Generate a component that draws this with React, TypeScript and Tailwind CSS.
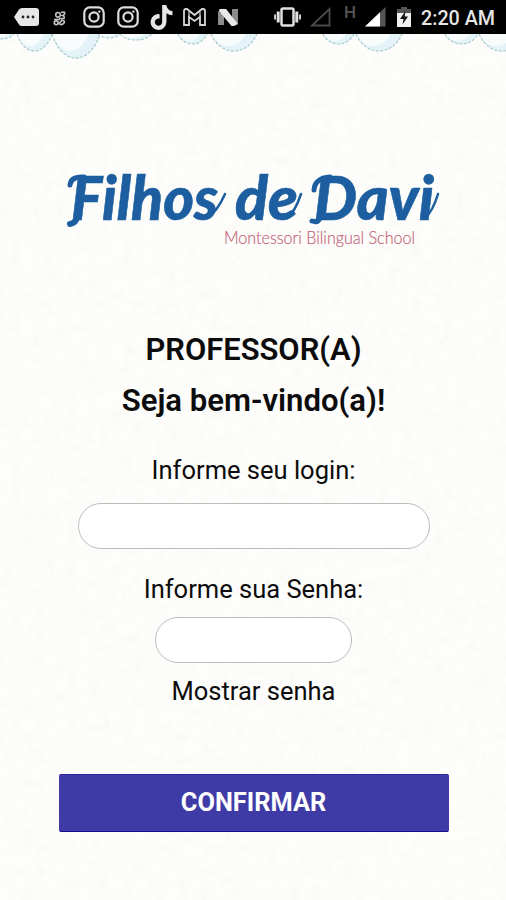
import React from 'react'
import { FaTiktok } from 'react-icons/fa'

const scallops = [
  { x1: -12, x2: 14, bottom: 5 },
  { x1: 17, x2: 52, bottom: 17 },
  { x1: 52, x2: 100, bottom: 24 },
  { x1: 98, x2: 120, bottom: 4 },
  { x1: 120, x2: 152, bottom: 6 },
  { x1: 178, x2: 207, bottom: 10 },
  { x1: 211, x2: 257, bottom: 17 },
  { x1: 323, x2: 354, bottom: 10 },
  { x1: 356, x2: 402, bottom: 17 },
  { x1: 445, x2: 478, bottom: 10 },
  { x1: 479, x2: 525, bottom: 17 },
]

function arc(x1: number, x2: number, bottom: number) {
  const w = (x2 - x1) * 0.22
  const depth = bottom * 1.34
  return `M${x1} 0C${x1 + w} ${depth} ${x2 - w} ${depth} ${x2} 0`
}

function InstagramIcon({ className }: { className: string }) {
  return (
    <svg className={className} width="22" height="22" viewBox="0 0 22 22" fill="none" stroke="#dcdcdc" strokeWidth="2.2">
      <rect x="1.3" y="1.3" width="19.4" height="19.4" rx="5.5" />
      <circle cx="11" cy="11" r="4.6" />
      <circle cx="16.4" cy="5.6" r="1.2" fill="#dcdcdc" stroke="none" />
    </svg>
  )
}

function StatusBar() {
  return (
    <header className="flex h-[34px] items-center bg-black text-[#e6e6e6]">
      <svg className="ml-[14px]" width="25" height="20" viewBox="0 0 25 20">
        <path d="M8 1h14a3 3 0 0 1 3 3v12a3 3 0 0 1-3 3H8q-2 0-3-1.5L0 10l5-7.5Q6 1 8 1z" fill="#e6e6e6" />
        <g fill="#222">
          <circle cx="9" cy="10" r="1.4" />
          <circle cx="14" cy="10" r="1.4" />
          <circle cx="19" cy="10" r="1.4" />
        </g>
      </svg>
      <svg className="mt-[2px] ml-[14px]" width="13" height="15" viewBox="0 0 13 15" fill="none" stroke="#c4c4c4" strokeWidth="1.6">
        <circle cx="5" cy="3.8" r="2.3" />
        <path d="M8 1.2h3.5q.8 2.5-2 3.3 2.5.8 1.5 3H6" />
        <path d="M1 8.5h6" />
        <circle cx="3.2" cy="11.8" r="1.9" />
        <path d="M5.5 13.5l4-5M9 9q3.5 1 2 3t-4 1.5" />
      </svg>
      <InstagramIcon className="ml-[17px]" />
      <InstagramIcon className="ml-[12px]" />
      <FaTiktok className="ml-[10px]" size={25} />
      <svg className="ml-[9px]" width="23" height="18" viewBox="0 0 23 18" fill="none" stroke="#d6d6d6" strokeWidth="1.8">
        <path d="M1 3Q1 1 3 1h1l7.5 6L19 1h1q2 0 2 2v14h-5V9l-5.5 4L6 9v8H1z" />
        <path d="M6 9V3.5M17 9V3.5" strokeWidth="1.2" />
      </svg>
      <svg className="ml-[12px]" width="21" height="17" viewBox="0 0 21 17">
        <path d="M0 2l6 4v10H0zM14 0h6v15l-6-4z" fill="#8c8c8c" />
        <path d="M1.5 0H8l12 15-4 2h-2.5L1 2z" fill="#e8e8e8" />
      </svg>
      <svg className="ml-[35px]" width="27" height="20" viewBox="0 0 27 20" fill="none" stroke="#e0e0e0">
        <rect x="7.5" y="1.5" width="12" height="17" rx="1.5" strokeWidth="2.5" />
        <path d="M4.2 4.5v11M22.8 4.5v11" strokeWidth="3" />
        <path d="M1 7.5v5M26 7.5v5" strokeWidth="1.8" />
      </svg>
      <svg className="ml-[9px]" width="21" height="20" viewBox="0 0 21 20" fill="none" stroke="#4a4a4a" strokeWidth="1.8">
        <path d="M2 18.5L19.5 2v16.5z" />
      </svg>
      <span className="mb-[9px] ml-[13px] w-[13px] font-[Roboto] text-[17px] leading-none font-medium text-[#555]">H</span>
      <svg className="ml-[8px]" width="21" height="20" viewBox="0 0 21 20">
        <path d="M20.5 0v19.5H0z" fill="#555" />
        <path d="M15 5.3v14.2H0z" fill="#fff" />
      </svg>
      <svg className="ml-[11px]" width="14" height="20" viewBox="0 0 14 20">
        <path d="M4 0h6v2h4v4H0V2h4z" fill="#555" />
        <path d="M0 6h14v14H0z" fill="#f0f0f0" />
        <path d="M8.5 4L3 12h3.5L5.5 17.5 11 9.5H7.7z" fill="#111" />
      </svg>
      <span className="mt-[3px] ml-[10px] font-[Roboto] text-[19.7px] leading-none font-medium whitespace-nowrap">2:20 AM</span>
    </header>
  )
}

function Logo() {
  return (
    <svg className="shrink-0" width="506" height="100" viewBox="0 160 506 100">
      <g fill="#1c5e9f" stroke="#1c5e9f" strokeWidth="0.6" strokeLinejoin="round" fontFamily="Lato, sans-serif" fontStyle="italic" fontWeight="900" fontSize="60">
        <text x="71" y="220" textLength="147" lengthAdjust="spacingAndGlyphs">Filhos</text>
        <text x="235" y="220" textLength="63" lengthAdjust="spacingAndGlyphs">de</text>
        <text x="314" y="220" textLength="120" lengthAdjust="spacingAndGlyphs">Davi</text>
      </g>
      {/* brush flourishes around the words */}
      <g fill="none" stroke="#1c5e9f" strokeLinecap="round">
        <path d="M70 185Q71 176 84 177" strokeWidth="5" />
        <path d="M77 217Q76 223 70 224" strokeWidth="6" />
        <path d="M207 218Q217 212 225 194" strokeWidth="2.5" />
        <path d="M287 218Q295 212 301 194" strokeWidth="2.5" />
        <path d="M314 190Q315 178 330 177" strokeWidth="5" />
        <path d="M320 218Q318 223 312 221" strokeWidth="5" />
        <path d="M425 218Q433 211 438 194" strokeWidth="2.5" />
      </g>
      <text x="224" y="243.5" fill="#c4667a" stroke="#c4667a" strokeWidth="0.2" fontFamily="Lato, sans-serif" fontWeight="300" fontSize="17.5" textLength="191" lengthAdjust="spacingAndGlyphs">Montessori Bilingual School</text>
    </svg>
  )
}

export default function App() {
  return (
    <div className="relative flex h-[900px] w-[506px] flex-col overflow-hidden bg-[#fdfdfb] font-[Roboto,sans-serif] text-[#0c0c0c]">
      {/* paper grain */}
      <svg className="absolute inset-0" width="506" height="900">
        <filter id="paper">
          <feTurbulence type="fractalNoise" baseFrequency="0.09" numOctaves="2" seed="4" />
          <feColorMatrix values="0 0 0 0 0.8 0 0 0 0 0.76 0 0 0 0 0.7 0.9 0 0 0 -0.42" />
        </filter>
        <rect width="506" height="900" filter="url(#paper)" opacity="0.4" />
      </svg>
      <div className="relative flex flex-col">
        <StatusBar />
        <svg width="506" height="30" viewBox="0 0 506 30">
          {scallops.map(s => (
            <g key={s.x1}>
              <path d={arc(s.x1, s.x2, s.bottom)} fill="#e4f3f7" />
              <path d={arc(s.x1, s.x2 - (s.x2 - s.x1) * 0.25, s.bottom * 0.7)} fill="#f8fcfc" />
              <path d={arc(s.x1, s.x2, s.bottom)} fill="none" stroke="#a3c8cc" strokeWidth="1.1" strokeDasharray="3 1.5" />
            </g>
          ))}
        </svg>
        <div className="mt-[96px]">
          <Logo />
        </div>
        <main className="flex flex-col items-center pl-px">
          <h1 className="mt-[65px] text-[30.9px] leading-[50px] font-semibold">PROFESSOR(A)</h1>
          <h2 className="mt-[1px] text-[31.1px] leading-[50px] font-semibold">Seja bem-vindo(a)!</h2>
          <label htmlFor="login" className="mt-[24px] text-[25.5px] leading-[40px]">Informe seu login:</label>
          <input id="login" className="mt-[13px] h-[46px] w-[352px] rounded-full border border-[#bcbcbf] bg-white px-5 outline-none" />
          <label htmlFor="senha" className="mt-[20px] text-[25.5px] leading-[40px]">Informe sua Senha:</label>
          <input id="senha" type="password" className="mt-[8px] h-[46px] w-[197px] rounded-full border border-[#bcbcbf] bg-white px-5 outline-none" />
          <button type="button" className="mt-[8px] text-[25.5px] leading-[40px]">Mostrar senha</button>
          <button type="button" className="mt-[63px] h-[58px] w-[390px] rounded-[2px] border border-t-[#30269a] border-r-[#4338a8] border-b-[#160b8a] border-l-[#4338a8] bg-[#3f3ba6] pb-[1px] text-[25.4px] leading-none font-bold text-white">
            CONFIRMAR
          </button>
        </main>
      </div>
    </div>
  )
}
